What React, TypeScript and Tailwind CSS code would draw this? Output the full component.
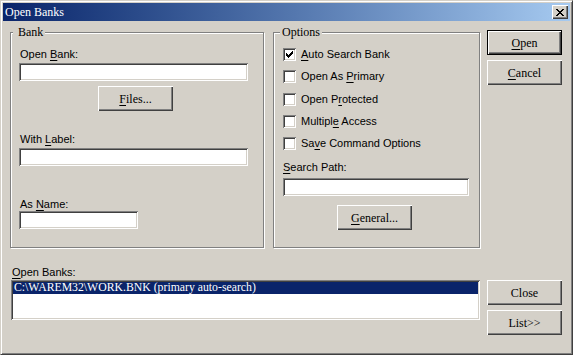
import React from "react";

const sunken =
  "bg-white shadow-[inset_1px_1px_0_#808080,inset_-1px_-1px_0_#fff,inset_2px_2px_0_#404040,inset_-2px_-2px_0_#d4d0c8]";
const raised =
  "shadow-[inset_1px_1px_0_#fff,inset_-1px_-1px_0_#404040,inset_-2px_-2px_0_#808080]";
const etched = "border border-[#808080] shadow-[inset_1px_1px_0_#fff,1px_1px_0_#fff]";
const serif = "font-['Liberation_Serif',serif]";
const sans = "font-['Liberation_Sans',Arial,sans-serif]";

function U({ children }: { children: React.ReactNode }) {
  return <span className="underline underline-offset-[2px]">{children}</span>;
}

function Btn({
  children,
  isDefault,
  className = "",
}: {
  children: React.ReactNode;
  isDefault?: boolean;
  className?: string;
}) {
  return (
    <div
      className={`w-[75px] h-[25px] bg-[#d4d0c8] ${
        isDefault ? "border border-black" : ""
      } ${className}`}
    >
      <div
        className={`w-full h-full flex items-center justify-center ${raised} ${serif} text-[12px] leading-[14px] text-black`}
      >
        {children}
      </div>
    </div>
  );
}

function Field({ className = "" }: { className?: string }) {
  return <div className={`h-[18px] ${sunken} ${className}`} />;
}

function Label({ children, className = "" }: { children: React.ReactNode; className?: string }) {
  return <div className={`${sans} text-[11px] leading-[13px] text-black ${className}`}>{children}</div>;
}

function GroupTitle({ children, className = "" }: { children: React.ReactNode; className?: string }) {
  return (
    <div
      className={`-mt-[8px] w-fit bg-[#d4d0c8] ${serif} text-[12px] leading-[14px] text-black ${className}`}
    >
      {children}
    </div>
  );
}

// classic 7x7 check glyph, one 3px tall column per x
const tops = [2, 3, 4, 3, 2, 1, 0];

function CheckBox({ checked, children, className = "" }: { checked?: boolean; children: React.ReactNode; className?: string }) {
  return (
    <div className={`flex items-center h-[13px] ${className}`}>
      <div className={`w-[13px] h-[13px] shrink-0 flex items-center justify-center ${sunken}`}>
        {checked && (
          <svg width="7" height="7" viewBox="0 0 7 7" shapeRendering="crispEdges">
            {tops.map((t, i) => (
              <rect key={i} x={i} y={t} width="1" height="3" fill="#000" />
            ))}
          </svg>
        )}
      </div>
      <Label className="ml-[5px]">{children}</Label>
    </div>
  );
}

function CloseX() {
  const rows: [number, number][] = [
    [0, 6],
    [1, 5],
    [2, 4],
    [3, 3],
    [2, 4],
    [1, 5],
    [0, 6],
  ];
  return (
    <svg width="8" height="7" viewBox="0 0 8 7" shapeRendering="crispEdges">
      {rows.map(([a, b], y) => (
        <g key={y}>
          <rect x={a} y={y} width="2" height="1" fill="#000" />
          <rect x={b} y={y} width="2" height="1" fill="#000" />
        </g>
      ))}
    </svg>
  );
}

export default function App() {
  return (
    <div className="w-[573px] h-[355px] bg-[#d4d0c8] border border-t-[#d4d0c8] border-l-[#d4d0c8] border-r-[#404040] border-b-[#404040] shadow-[inset_1px_1px_0_#fff,inset_-1px_-1px_0_#808080] p-[2px] overflow-hidden">
      {/* title bar */}
      <div className="h-[18px] flex items-center justify-between bg-gradient-to-r from-[#0a246a] to-[#a6caf0]">
        <span className={`pl-[2px] ${serif} text-[12px] leading-[18px] text-white`}>Open Banks</span>
        <div className={`mr-[2px] w-[16px] h-[14px] flex items-center justify-center bg-[#d4d0c8] ${raised}`}>
          <CloseX />
        </div>
      </div>

      <div className="pl-[7px]">
        {/* top row */}
        <div className="flex items-start">
          <div className={`mt-[11px] w-[254px] h-[216px] ${etched} flex flex-col`}>
            <GroupTitle className="ml-[2px] pl-[5px] pr-[2px]">Bank</GroupTitle>
            <div className="pl-[8px] flex flex-col">
              <Label className="mt-[9px] ml-[1px]">
                Open <U>B</U>ank:
              </Label>
              <Field className="mt-[2px] w-[229px]" />
              <Btn className="mt-[5px] ml-[79px]">
                <U>F</U>iles...
              </Btn>
              <Label className="mt-[22px] ml-[1px]">
                With <U>L</U>abel:
              </Label>
              <Field className="mt-[2px] w-[229px]" />
              <Label className="mt-[32px] ml-[1px]">
                As <U>N</U>ame:
              </Label>
              <Field className="w-[119px]" />
            </div>
          </div>

          <div className={`mt-[11px] ml-[9px] w-[207px] h-[216px] ${etched} flex flex-col`}>
            <GroupTitle className="ml-[6px] pl-[2px] pr-[2px]">Options</GroupTitle>
            <div className="pl-[9px] flex flex-col">
              <CheckBox checked className="mt-[9px]">
                <U>A</U>uto Search Bank
              </CheckBox>
              <CheckBox className="mt-[9px]">
                Open As <U>P</U>rimary
              </CheckBox>
              <CheckBox className="mt-[10px]">
                Open P<U>r</U>otected
              </CheckBox>
              <CheckBox className="mt-[9px]">
                Multipl<U>e</U> Access
              </CheckBox>
              <CheckBox className="mt-[9px]">
                Sa<U>v</U>e Command Options
              </CheckBox>
              <Label className="mt-[11px]">
                <U>S</U>earch Path:
              </Label>
              <Field className="mt-[4px] w-[186px]" />
              <Btn className="mt-[9px] ml-[54px]">
                <U>G</U>eneral...
              </Btn>
            </div>
          </div>

          <div className="mt-[9px] ml-[7px] flex flex-col gap-[5px]">
            <Btn isDefault>
              <U>O</U>pen
            </Btn>
            <Btn>
              <U>C</U>ancel
            </Btn>
          </div>
        </div>

        {/* bottom row */}
        <div className="flex items-start">
          <div className="flex flex-col">
            <Label className="mt-[18px] ml-[2px]">
              <U>O</U>pen Banks:
            </Label>
            <div className={`mt-[1px] ml-[1px] w-[469px] h-[40px] p-[2px] ${sunken}`}>
              <div className={`h-[12px] bg-[#0a246a] pl-[1px] ${serif} text-[11.75px] leading-[12px] text-white whitespace-nowrap`}>
                C:\WAREM32\WORK.BNK (primary auto-search)
              </div>
            </div>
          </div>
          <div className="mt-[32px] ml-[7px] flex flex-col gap-[5px]">
            <Btn>Close</Btn>
            <Btn>List&gt;&gt;</Btn>
          </div>
        </div>
      </div>
    </div>
  );
}
